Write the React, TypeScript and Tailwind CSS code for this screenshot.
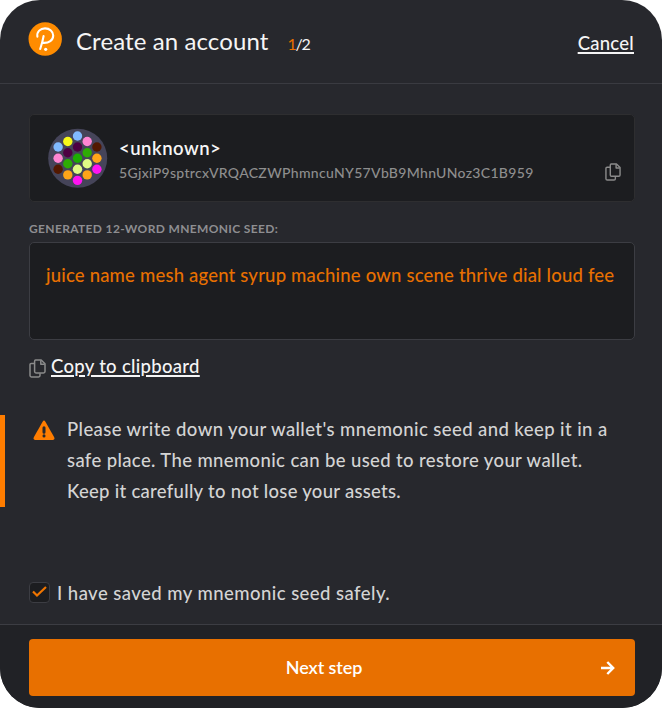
const FONT = "font-['Lato','Open_Sans',sans-serif]";

const DOTS: [number, number, string][] = [
  [29.5, 8, "#80b9ff"],
  [19.8, 13.5, "#f8f81a"],
  [39.2, 13.5, "#ff85d3"],
  [10.1, 19, "#80b9ff"],
  [29.5, 19, "#4d0042"],
  [48.9, 19, "#521800"],
  [19.8, 24.7, "#4d0042"],
  [39.2, 24.7, "#2eab05"],
  [10.1, 30.2, "#ff85d3"],
  [29.5, 30.2, "#1dac03"],
  [48.9, 30.2, "#ffa519"],
  [19.8, 35.7, "#2eab05"],
  [39.2, 35.7, "#e0fa85"],
  [10.1, 41.3, "#521800"],
  [29.5, 41.3, "#e0fa85"],
  [48.9, 41.3, "#ff14f1"],
  [19.8, 46.9, "#ffa519"],
  [39.2, 46.9, "#ffa519"],
  [29.5, 52.4, "#ff14f1"],
];

function Logo() {
  return (
    <svg width="34" height="34" viewBox="0 0 34 34" fill="none">
      <circle cx="17.2" cy="17" r="16.7" fill="#ff8c00" />
      <path
        d="M9.4 14.6C8.6 9.6 12.4 6.4 17 6.4C21.7 6.4 25.2 9.5 25.2 13.6C25.2 18.3 21 21.4 14.6 20.8M15.6 14C14.8 18.8 13.6 22.8 12.2 27"
        stroke="white"
        strokeWidth="2.1"
        strokeLinecap="round"
      />
      <circle cx="17.7" cy="27.3" r="1.6" fill="white" />
    </svg>
  );
}

function Identicon() {
  return (
    <svg className="shrink-0" width="60" height="60" viewBox="0 0 60 60">
      <circle cx="29.7" cy="30.2" r="29.5" fill="#454459" />
      {DOTS.map(([x, y, c], i) => (
        <circle key={i} cx={x} cy={y} r="4.7" fill={c} />
      ))}
    </svg>
  );
}

function CopyIcon({ className }: { className: string }) {
  return (
    <svg className={className} viewBox="0 0 17 19" fill="none" stroke="#8b8b8b" strokeWidth="1.5" strokeLinejoin="round">
      <path d="M6.6 1H12.2L16 4.8V12.6Q16 14 14.6 14H7Q5.6 14 5.6 12.6V2.2Q5.6 1 6.6 1Z" />
      <path d="M11.8 1.3V5.2H15.7" />
      <path d="M5.4 4.4H2.2Q1 4.4 1 5.6V16.6Q1 18 2.4 18H9.6Q11 18 11 16.6V14.2" />
    </svg>
  );
}

export default function App() {
  return (
    <div className={`${FONT} h-[708px] w-[662px] bg-white`}>
      <main className="flex h-full flex-col overflow-hidden rounded-[40px] bg-[#27282d] text-[#f5f5f5]">
        <header className="flex h-[84px] shrink-0 items-center border-b border-[#3a3b41] pr-7 pl-7">
          <div className="-mt-[5px] h-[34px] w-[34px]"><Logo /></div>
          <h1 className="-mt-px ml-[14px] text-[24px] leading-8 tracking-[0.1px]">Create an account</h1>
          <span className="mt-[5px] ml-[19px] text-[16px] tracking-[-1.2px]"><span className="text-[#e86f00]">1</span>/2</span>
          <a className="mt-[5px] ml-auto text-[18.5px] font-medium tracking-[0.25px] underline decoration-[1.5px] underline-offset-2">Cancel</a>
        </header>

        <div className="flex grow flex-col px-7 pt-[30px]">
          <section className="ml-px flex h-[88px] w-[606px] shrink-0 rounded-[5px] border border-[#2e2e30] bg-[#1c1d20] pt-[13px] pl-[18px]">
            <Identicon />
            <div className="ml-[11px] w-[502px]">
              <div className="pt-[7px] text-[18.5px] leading-[26px] font-semibold tracking-[0.5px]">&lt;unknown&gt;</div>
              <div className="flex items-center">
                <span className="text-[14px] leading-6 font-medium tracking-[0.32px] text-[#8e8e8e]">5GjxiP9sptrcxVRQACZWPhmncuNY57VbB9MhnUNoz3C1B959</span>
                <CopyIcon className="-mt-0.5 ml-auto h-[18px] w-4" />
              </div>
            </div>
          </section>

          <div className="mt-[18px] ml-px text-[12px] leading-[18px] font-bold tracking-[0.35px] text-[#8e8e91]">GENERATED 12-WORD MNEMONIC SEED:</div>
          <div className="mt-[4px] ml-px h-[98px] w-[606px] shrink-0 rounded-[5px] border border-[#3c3d43] bg-[#1c1d20] pt-[18px] pl-4 text-[18.5px] leading-7 font-medium tracking-[0.19px] whitespace-nowrap text-[#e87000]">juice name mesh agent syrup machine own scene thrive dial loud fee</div>

          <div className="mt-[11px] flex h-8 items-center">
            <CopyIcon className="mt-[3px] ml-[0.5px] h-[19px] w-[17px]" />
            <a className="ml-[5.5px] text-[18.5px] font-medium tracking-[0.3px] underline decoration-[1.5px] underline-offset-2">Copy to clipboard</a>
          </div>

          <div className="mt-8 -ml-7 flex h-[92px] w-[662px] border-l-[5px] border-[#ff7d00] text-[#d4d4d4]">
            <svg className="mt-[5px] ml-7 shrink-0" width="22" height="21" viewBox="0 0 22 21">
              <path d="M9.6 1.7Q11 -.5 12.4 1.7L21.2 17.3Q22.1 20 19.8 20H2.2Q-.1 20 .8 17.3Z" fill="#ff7d00" />
              <path d="M11 7.8V12.3M11 15.8V16" stroke="#27282d" strokeWidth="3" strokeLinecap="round" />
            </svg>
            <p className="-mt-px ml-3 text-[18.5px] leading-[31px] font-medium whitespace-nowrap">
              <span className="block tracking-[0.41px]">Please write down your wallet's mnemonic seed and keep it in a</span>
              <span className="block tracking-[0.37px]">safe place. The mnemonic can be used to restore your wallet.</span>
              <span className="block tracking-[0.28px]">Keep it carefully to not lose your assets.</span>
            </p>
          </div>

          <label className="mt-[70px] ml-px flex h-[30px] items-center text-[18.5px] font-medium text-[#d4d4d4]">
            <span className="flex h-[21px] w-[21px] items-center justify-center rounded-[4px] border border-[#3c3d43] bg-[#1c1d20]">
              <svg width="15" height="12" viewBox="0 0 15 12" fill="none" stroke="#f07500" strokeWidth="2.2"><path d="M1 5.5L5 9.5L14 1" /></svg>
            </span>
            <span className="mt-1 ml-[7px] tracking-[0.45px]">I have saved my mnemonic seed safely.</span>
          </label>
        </div>

        <footer className="h-[84px] shrink-0 border-t border-[#3c3d43] bg-[#212226] px-7 pt-[14px]">
          <button className="relative ml-px flex h-[57px] w-[606px] items-center justify-center rounded-[4px] bg-[#e87000] pr-4 text-[18px] font-semibold tracking-[-0.1px] text-white">
            Next step
            <svg className="absolute right-[20px]" width="15" height="14" viewBox="0 0 15 14" fill="none" stroke="white" strokeWidth="2.4"><path d="M1 7H12.5M7.3 1L13.2 7L7.3 13" /></svg>
          </button>
        </footer>
      </main>
    </div>
  );
}
